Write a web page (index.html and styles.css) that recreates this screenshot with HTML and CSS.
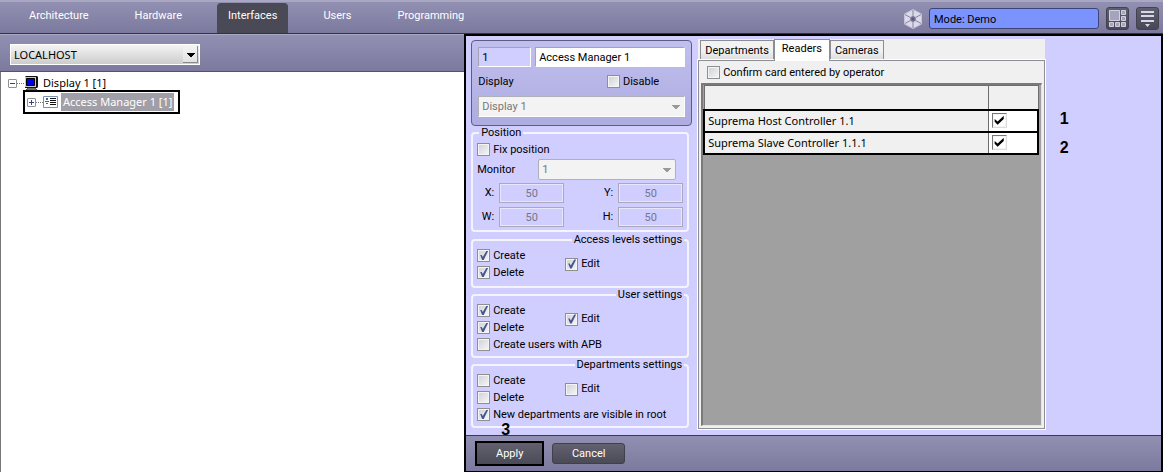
FILE: index.html
```
<!DOCTYPE html>
<html lang="en">
  <head>
    <meta charset="UTF-8" />
    <meta name="viewport" content="width=device-width, initial-scale=1.0" />
    <title>System settings</title>
    <link rel="stylesheet" href="styles.css">
  </head>
  <body>
    <header class="topbar">
      <nav class="menu">
        <a href="#">Architecture</a>
        <a href="#">Hardware</a>
        <a href="#" class="active">Interfaces</a>
        <a href="#">Users</a>
        <a href="#">Programming</a>
      </nav>
      <div class="tools">
        <svg class="hex" width="18" height="20" viewBox="0 0 18 20">
          <path d="M9 0.500 17.500 5v10L9 19.500 0.500 15V5z" fill="#dcdae9" stroke="#c5c3d9" />
          <path d="M9 1v18M1 5.500l16 9M17 5.500l-16 9" stroke="#8582a3" fill="none" />
          <path d="M9 6.500 12 8.200v3.600L9 13.500 6 11.800V8.200z" fill="#77759a" stroke="#c5c3d9" stroke-width="0.6" />
          <circle cx="9" cy="10" r="1.500" fill="#5c5a7c" />
        </svg>
        <input class="mode" type="text" value="Mode: Demo" aria-label="Mode" readonly />
        <button class="tool" type="button" aria-label="Layout">
          <svg width="17" height="17" viewBox="0 0 17 17" fill="#a5a4bd" stroke="#d2d1e2">
            <path d="M0.500 0.500h10v10h-10zM12.500 0.500h4v4h-4zM12.500 6.500h4v4h-4zM0.500 12.500h4v4h-4zM6.500 12.500h4v4h-4zM12.500 12.500h4v4h-4z" />
          </svg>
        </button>
        <button class="tool" type="button" aria-label="Menu">
          <svg width="17" height="17" viewBox="0 0 17 17" fill="#d8d7e6">
            <path d="M2 1h13v2H2zM2 5h13v2H2zM2 10h13v2H2zM6 14h5L8.500 17z" />
          </svg>
        </button>
      </div>
    </header>

    <main class="main">
      <section class="objects">
        <div class="subbar">
          <select class="host" aria-label="Computer">
            <option>LOCALHOST</option>
          </select>
        </div>
        <ul class="tree">
          <li class="node">
            <button class="toggle minus" type="button" aria-label="Collapse"></button>
            <span class="dots"></span>
            <svg width="16" height="15" viewBox="0 0 16 15">
              <path d="M2 0h11l1 1v10l-1 1H1V1z" fill="#111" />
              <path d="M1 1h11v10H1z" fill="#c8c8c8" />
              <path d="M2.500 2.500h8v7h-8z" fill="#0000e6" stroke="#000" />
              <path d="M4 12h7l2 2H2z" fill="#999" stroke="#222" stroke-width="0.7" />
            </svg>
            <span class="name">Display 1 [1]</span>
          </li>
          <li class="node child selected">
            <button class="toggle plus" type="button" aria-label="Expand"></button>
            <span class="dots"></span>
            <svg width="15" height="12" viewBox="0 0 15 12">
              <path d="M0.500 0.500h14v11h-14z" fill="#fff" stroke="#7d8fae" />
              <path d="M3 2h2v2H3zM2 5h4v1H2zM3 7h2v1H3z" fill="#3c5fa8" />
              <path d="M7 2h6v1H7zM7 4h6v1H7zM7 6h6v1H7zM7 8h6v1H7z" fill="#111" />
            </svg>
            <span class="name">Access Manager 1 [1]</span>
          </li>
        </ul>
      </section>

      <form class="editor" action="#">
        <div class="content">
          <div class="settings">
            <div class="card">
              <div class="ident">
                <input class="num" type="text" value="1" aria-label="Number" readonly />
                <input class="title" type="text" value="Access Manager 1" aria-label="Name" />
              </div>
              <div class="line">
                <label for="display">Display</label>
                <label class="check"><input type="checkbox" />Disable</label>
              </div>
              <select id="display" class="combo" disabled>
                <option>Display 1</option>
              </select>
            </div>

            <fieldset class="position">
              <legend>Position</legend>
              <label class="check"><input type="checkbox" />Fix position</label>
              <div class="monitor">
                <label for="monitor">Monitor</label>
                <select id="monitor" class="combo" disabled>
                  <option>1</option>
                </select>
              </div>
              <div class="coords">
                <label for="px">X:</label><input id="px" type="text" value="50" disabled />
                <label for="py">Y:</label><input id="py" type="text" value="50" disabled />
                <label for="pw">W:</label><input id="pw" type="text" value="50" disabled />
                <label for="ph">H:</label><input id="ph" type="text" value="50" disabled />
              </div>
            </fieldset>

            <fieldset class="rights levels">
              <legend>Access levels settings</legend>
              <label class="check"><input type="checkbox" checked />Create</label>
              <label class="check edit"><input type="checkbox" checked />Edit</label>
              <label class="check"><input type="checkbox" checked />Delete</label>
            </fieldset>

            <fieldset class="rights">
              <legend>User settings</legend>
              <label class="check"><input type="checkbox" checked />Create</label>
              <label class="check edit"><input type="checkbox" checked />Edit</label>
              <label class="check"><input type="checkbox" checked />Delete</label>
              <label class="check wide"><input type="checkbox" />Create users with APB</label>
            </fieldset>

            <fieldset class="rights">
              <legend>Departments settings</legend>
              <label class="check"><input type="checkbox" />Create</label>
              <label class="check edit"><input type="checkbox" />Edit</label>
              <label class="check"><input type="checkbox" />Delete</label>
              <label class="check wide"><input type="checkbox" checked />New departments are visible in root</label>
            </fieldset>
          </div>

          <div class="tabs">
            <div class="tablist">
              <button type="button">Departments</button>
              <button type="button" class="active">Readers</button>
              <button type="button">Cameras</button>
            </div>
            <div class="page">
              <label class="check"><input type="checkbox" />Confirm card entered by operator</label>
              <div class="grid">
                <table class="readers">
                  <thead>
                    <tr><th></th><th class="flag"></th></tr>
                  </thead>
                  <tbody>
                    <tr>
                      <td>Suprema Host Controller 1.1</td>
                      <td class="flag"><input type="checkbox" aria-label="Suprema Host Controller 1.1" checked /><span class="mark">1</span></td>
                    </tr>
                    <tr>
                      <td>Suprema Slave Controller 1.1.1</td>
                      <td class="flag"><input type="checkbox" aria-label="Suprema Slave Controller 1.1.1" checked /><span class="mark second">2</span></td>
                    </tr>
                  </tbody>
                </table>
              </div>
            </div>
          </div>
        </div>

        <footer class="actions">
          <button class="apply" type="submit">Apply</button>
          <button type="button">Cancel</button>
          <span class="mark">3</span>
        </footer>
      </form>
    </main>
  </body>
</html>
```
FILE: styles.css
```
* {
  box-sizing: border-box;
}
body {
  margin: 0;
  min-height: 100vh;
  display: flex;
  flex-direction: column;
  font-family: Roboto, 'Liberation Sans', Arial, sans-serif;
  font-size: 11px;
  line-height: 14px;
  color: #000;
  background-color: #fff;
}
button,
input,
select {
  margin: 0;
  font: inherit;
  color: inherit;
}

/* top bar */
.topbar {
  height: 34px;
  display: flex;
  justify-content: space-between;
  background: linear-gradient(#9290b2, #7b799d);
  border-top: 2px solid #a9a7c1;
  border-bottom: 1px solid #33323f;
}
.menu {
  display: flex;
  gap: 24px;
  padding: 1px 0 0 18px;
}
.menu a {
  padding: 0 11px;
  line-height: 26px;
  color: #fff;
  text-decoration: none;
}
.menu .active {
  background-color: #4a4956;
  border-radius: 4px 4px 0 0;
}
.tools {
  display: flex;
  align-items: center;
  gap: 7px;
  padding: 2px 4px 0 0;
}
.mode {
  width: 170px;
  height: 21px;
  padding: 2px 4px 0;
  background-color: #7b93ff;
  border: 1px solid #3c4478;
  border-radius: 3px;
}
.tool {
  width: 23px;
  height: 23px;
  padding: 0;
  display: grid;
  place-items: center;
  background: linear-gradient(#5f5e70, #484755);
  border: 1px solid #434250;
  border-radius: 3px;
}

/* left side */
.main {
  flex: 1;
  display: flex;
}
.objects {
  width: calc(40% - 1px);
  display: flex;
  flex-direction: column;
}
.subbar {
  height: 38px;
  padding: 9px;
  background: linear-gradient(#9290b2, #7b799d);
  border-top: 1px solid #a9a7c1;
  border-bottom: 1px solid #55536b;
}
select {
  appearance: none;
  display: block;
  border-radius: 0;
}
.host {
  width: 190px;
  height: 21px;
  margin-left: 1px;
  padding: 0 3px;
  border: 1px solid #fff;
  font-family: 'Noto Sans', sans-serif;
  background:
    linear-gradient(to bottom left, #000 50%, transparent 51%) right 8px top 8px / 4px 4px no-repeat,
    linear-gradient(to bottom right, #000 50%, transparent 51%) right 4px top 8px / 4px 4px no-repeat,
    linear-gradient(#f4f4f4, #e2e2e2) right 2px top 1px / 14px 16px no-repeat,
    linear-gradient(#8a8a8a, #8a8a8a) right 1px top 1px / 15px 17px no-repeat,
    linear-gradient(#f4f4f4, #ccc);
}
.tree {
  flex: 1;
  margin: 0;
  padding: 2px 0 0 7px;
  list-style: none;
  border-left: 1px solid #777;
  background-color: #fff;
  font-family: 'Noto Sans', sans-serif;
}
.node {
  width: max-content;
  height: 18px;
  display: flex;
  align-items: center;
}
.node .name {
  margin-left: 1px;
  padding: 0 2px;
  line-height: 18px;
}
.child {
  height: 24px;
  margin: -2px 0 0 15px;
  padding: 0 4px 0 2px;
  border: 2px solid #000;
}
.selected .name {
  margin-left: 3px;
  color: #fff;
  background-color: #a09ea6;
}
.toggle {
  width: 9px;
  height: 9px;
  padding: 0;
  border: 1px solid #919191;
  border-radius: 1px;
  background: linear-gradient(#2d4291, #2d4291) center / 5px 1px no-repeat #fff;
}
.plus {
  background:
    linear-gradient(#2d4291, #2d4291) center / 5px 1px no-repeat,
    linear-gradient(#2d4291, #2d4291) center / 1px 5px no-repeat,
    #fff;
}
.dots {
  width: 7px;
  border-top: 1px dotted #777;
}

/* right side */
.editor {
  flex: 1;
  display: flex;
  flex-direction: column;
  border: 2px solid #000;
  border-bottom-width: 1px;
  background-color: #cfceff;
}
.content {
  flex: 1;
  display: flex;
  gap: 6px;
  padding: 3px 5px 6px;
}
.settings {
  width: 221px;
  padding-top: 1px;
}
.card {
  height: 86px;
  padding: 6px;
  border: 1px solid #5e5c85;
  border-radius: 4px;
  background: linear-gradient(#c0bfee, #aeace0);
}
.ident {
  display: flex;
  gap: 4px;
}
.ident input {
  height: 20px;
  padding: 0 3px;
  border: 1px solid #fff;
  border-top-color: #a3a3b5;
  border-left-color: #a3a3b5;
}
.ident .num {
  width: 53px;
  background-color: #cfceff;
}
.ident .title {
  flex: 1;
  min-width: 0;
}
.line {
  height: 29px;
  padding-right: 26px;
  display: flex;
  align-items: center;
  justify-content: space-between;
}
.combo {
  width: 100%;
  height: 21px;
  padding: 0 3px;
  border: 1px solid #fff;
  border-top-color: #b0b0b8;
  border-left-color: #b0b0b8;
  color: #777;
  opacity: 1;
  background:
    linear-gradient(to bottom left, #999 50%, transparent 51%) right 8px top 8px / 4px 4px no-repeat,
    linear-gradient(to bottom right, #999 50%, transparent 51%) right 4px top 8px / 4px 4px no-repeat,
    #f3f3f3;
}

.check {
  display: flex;
  align-items: center;
  gap: 3px;
}
input[type='checkbox'] {
  appearance: none;
  flex: none;
  width: 13px;
  height: 13px;
  border: 1px solid #8e8f8f;
  background: linear-gradient(135deg, #cdd0d6, #f7f7f7);
  box-shadow: inset 0 0 0 1px #f4f4f4;
}
input[type='checkbox']:checked::before {
  content: '';
  display: block;
  width: 11px;
  height: 11px;
  background-color: #44558f;
  clip-path: polygon(18% 45%, 32% 45%, 42% 64%, 74% 8%, 90% 8%, 50% 92%, 36% 92%);
}

fieldset {
  width: 218px;
  margin: 0;
  padding: 0 4px 3px;
  border: 2px solid #f4f4ff;
  border-radius: 4px;
}
legend {
  margin-left: 2px;
  padding: 0 2px;
}
.position .check {
  height: 19px;
}
.monitor {
  display: flex;
  align-items: center;
  justify-content: space-between;
}
.monitor .combo {
  width: 138px;
  margin-right: 7px;
  border-color: #b0b0b8;
  border-radius: 2px;
}
.coords {
  display: grid;
  grid-template-columns: 22px 65px 54px 65px;
  row-gap: 4px;
  padding-top: 3px;
}
.coords label {
  padding: 3px 5px 0 0;
  text-align: right;
}
.coords input {
  width: 100%;
  height: 20px;
  padding: 0;
  text-align: center;
  color: #77758c;
  background-color: #cfceff;
  border: 1px solid #a9a8bd;
  outline: 1px solid #e6e6ff;
  outline-offset: -2px;
}
.rights {
  display: grid;
  grid-template-columns: 88px 1fr;
  grid-auto-rows: 17px;
}
.rights legend {
  margin-left: auto;
  margin-right: -1px;
}
.levels {
  margin-top: 1px;
  padding-bottom: 5px;
}
.edit {
  grid-column: 2;
  grid-row: 1 / span 2;
}
.wide {
  grid-column: 1 / -1;
}

/* tabs */
.tabs {
  width: 347px;
  display: flex;
  flex-direction: column;
  background-color: #f0f0f0;
}
.tablist {
  display: flex;
  align-items: flex-end;
  padding-left: 2px;
}
.tablist button {
  height: 20px;
  padding: 0 4px;
  border: 1px solid #8c8e94;
  border-bottom: none;
  background: linear-gradient(#f2f2f2 50%, #dcdcdc);
}
.tablist .active {
  height: 22px;
  margin-bottom: -1px;
  padding: 0 7px 3px;
  z-index: 1;
  background: #fff;
}
.page {
  flex: 1;
  display: flex;
  flex-direction: column;
  border: 1px solid #8c8e94;
  outline: 1px solid #fff;
  padding: 1px 2px 2px;
}
.page .check {
  height: 21px;
  padding-left: 6px;
}
.grid {
  flex: 1;
  border: 2px solid #7a7a7a;
  border-right: 1px solid #e3e3e3;
  border-bottom: 1px solid #e3e3e3;
  padding-right: 2px;
  background-color: #a0a0a0;
}
.readers {
  width: 100%;
  border-collapse: collapse;
  table-layout: fixed;
  font-family: 'Noto Sans', sans-serif;
}
.readers th {
  height: 24px;
  border: 1px solid #6d6d6d;
  background-color: #f0f0f0;
}
.readers td {
  height: 22px;
  padding: 0 3px;
  border: 2px solid #000;
  border-right: 1px solid #6d6d6d;
  background-color: #f0f0f0;
}
.readers .flag {
  width: 50px;
}
.readers td.flag {
  position: relative;
  border-left: 1px solid #6d6d6d;
  border-right: 2px solid #000;
  background-color: #fff;
}
.readers input[type='checkbox'] {
  display: block;
  width: 15px;
  height: 15px;
  border-color: #777 #ddd #ddd #777;
  background: #fff;
}
.readers input:checked::before {
  width: 13px;
  height: 13px;
  background-color: #000;
  clip-path: polygon(15% 38%, 38% 58%, 85% 14%, 85% 38%, 38% 82%, 15% 60%);
}
.mark {
  position: absolute;
  font-family: 'Liberation Sans', Arial, sans-serif;
  font-size: 16px;
  font-weight: bold;
}
.readers .mark {
  top: 1px;
  left: 71px;
}
.readers .second {
  top: 8px;
}

/* bottom buttons */
.actions {
  position: relative;
  height: 36px;
  display: flex;
  align-items: center;
  gap: 8px;
  padding: 0 9px;
  background: linear-gradient(#9290b2, #7b799d);
  border-top: 1px solid #3b3a4c;
}
.actions button {
  width: 73px;
  height: 21px;
  padding: 0;
  color: #fff;
  background: linear-gradient(#63616f, #4b4a57);
  border: 1px solid #403f4c;
  border-radius: 3px;
}
.actions .apply {
  width: 69px;
  height: 25px;
  border: 2px solid #000;
  border-radius: 0;
}
.actions .mark {
  top: -13px;
  left: 35px;
}
```
